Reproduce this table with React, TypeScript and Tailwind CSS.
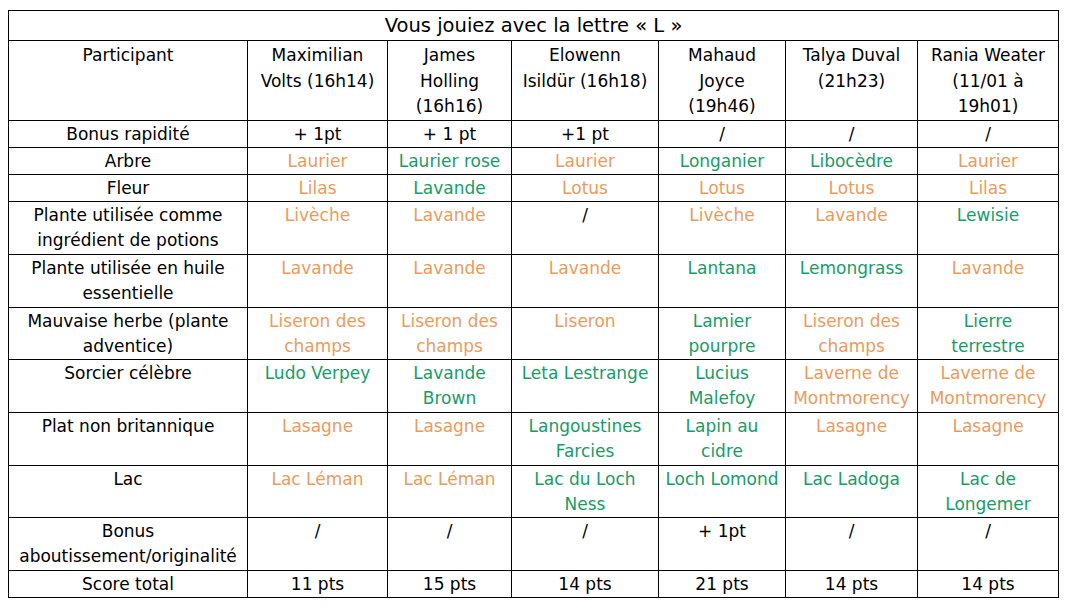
import React from "react";

type Cell = { t: string[]; c?: "o" | "g" };

const O = (...t: string[]): Cell => ({ t, c: "o" });
const G = (...t: string[]): Cell => ({ t, c: "g" });
const K = (...t: string[]): Cell => ({ t });

const rows: { h: string; label: string[]; cells: Cell[] }[] = [
  {
    h: "h-[79px]",
    label: ["Participant"],
    cells: [
      K("Maximilian", "Volts (16h14)"),
      K("James", "Holling", "(16h16)"),
      K("Elowenn", "Isildür (16h18)"),
      K("Mahaud", "Joyce", "(19h46)"),
      K("Talya Duval", "(21h23)"),
      K("Rania Weater", "(11/01 à", "19h01)"),
    ],
  },
  {
    h: "h-[27px]",
    label: ["Bonus rapidité"],
    cells: [K("+ 1pt"), K("+ 1 pt"), K("+1 pt"), K("/"), K("/"), K("/")],
  },
  {
    h: "h-[26px]",
    label: ["Arbre"],
    cells: [O("Laurier"), G("Laurier rose"), O("Laurier"), G("Longanier"), G("Libocèdre"), O("Laurier")],
  },
  {
    h: "h-[27px]",
    label: ["Fleur"],
    cells: [O("Lilas"), G("Lavande"), O("Lotus"), O("Lotus"), O("Lotus"), O("Lilas")],
  },
  {
    h: "h-[53px]",
    label: ["Plante utilisée comme", "ingrédient de potions"],
    cells: [O("Livèche"), O("Lavande"), K("/"), O("Livèche"), O("Lavande"), G("Lewisie")],
  },
  {
    h: "h-[53px]",
    label: ["Plante utilisée en huile", "essentielle"],
    cells: [O("Lavande"), O("Lavande"), O("Lavande"), G("Lantana"), G("Lemongrass"), O("Lavande")],
  },
  {
    h: "h-[52px]",
    label: ["Mauvaise herbe (plante", "adventice)"],
    cells: [
      O("Liseron des", "champs"),
      O("Liseron des", "champs"),
      O("Liseron"),
      G("Lamier", "pourpre"),
      O("Liseron des", "champs"),
      G("Lierre", "terrestre"),
    ],
  },
  {
    h: "h-[53px]",
    label: ["Sorcier célèbre"],
    cells: [
      G("Ludo Verpey"),
      G("Lavande", "Brown"),
      G("Leta Lestrange"),
      G("Lucius", "Malefoy"),
      O("Laverne de", "Montmorency"),
      O("Laverne de", "Montmorency"),
    ],
  },
  {
    h: "h-[53px]",
    label: ["Plat non britannique"],
    cells: [
      O("Lasagne"),
      O("Lasagne"),
      G("Langoustines", "Farcies"),
      G("Lapin au", "cidre"),
      O("Lasagne"),
      O("Lasagne"),
    ],
  },
  {
    h: "h-[52px]",
    label: ["Lac"],
    cells: [
      O("Lac Léman"),
      O("Lac Léman"),
      G("Lac du Loch", "Ness"),
      G("Loch Lomond"),
      G("Lac Ladoga"),
      G("Lac de", "Longemer"),
    ],
  },
  {
    h: "h-[53px]",
    label: ["Bonus", "aboutissement/originalité"],
    cells: [K("/"), K("/"), K("/"), K("+ 1pt"), K("/"), K("/")],
  },
  {
    h: "h-[26px]",
    label: ["Score total"],
    cells: [K("11 pts"), K("15 pts"), K("14 pts"), K("21 pts"), K("14 pts"), K("14 pts")],
  },
];

const Lines = ({ t }: { t: string[] }) => (
  <>
    {t.map((l, i) => (
      <div key={i} className="whitespace-nowrap">
        {l}
      </div>
    ))}
  </>
);

export default function App() {
  return (
    <div className="bg-white w-[1074px] h-[610px] pt-[10px] pl-[8px] font-['DejaVu_Sans',sans-serif] text-[17px] text-black">
      <table className="table-fixed border-collapse w-[1051px]">
        <colgroup>
          <col className="w-[239px]" />
          <col className="w-[140px]" />
          <col className="w-[124px]" />
          <col className="w-[147px]" />
          <col className="w-[127px]" />
          <col className="w-[132px]" />
          <col className="w-[141px]" />
        </colgroup>
        <tbody>
          <tr className="h-[30px]">
            <td colSpan={7} className="border border-black p-0 text-center align-middle text-[19.5px] leading-[28px]">
              Vous jouiez avec la lettre « L »
            </td>
          </tr>
          {rows.map((r, i) => {
            const pad = i === 0 ? "pt-[2px] leading-[25.5px]" : "pt-[1px] leading-[25px]";
            return (
              <tr key={i} className={r.h}>
                <td className={"border border-black p-0 text-center align-top " + pad}>
                  <Lines t={r.label} />
                </td>
                {r.cells.map((c, j) => (
                  <td
                    key={j}
                    className={
                      "border border-black p-0 text-center align-top " +
                      pad +
                      " " +
                      (c.c === "o" ? "text-[#ec9a5c]" : c.c === "g" ? "text-[#179c68]" : "")
                    }
                  >
                    <Lines t={c.t} />
                  </td>
                ))}
              </tr>
            );
          })}
        </tbody>
      </table>
    </div>
  );
}
